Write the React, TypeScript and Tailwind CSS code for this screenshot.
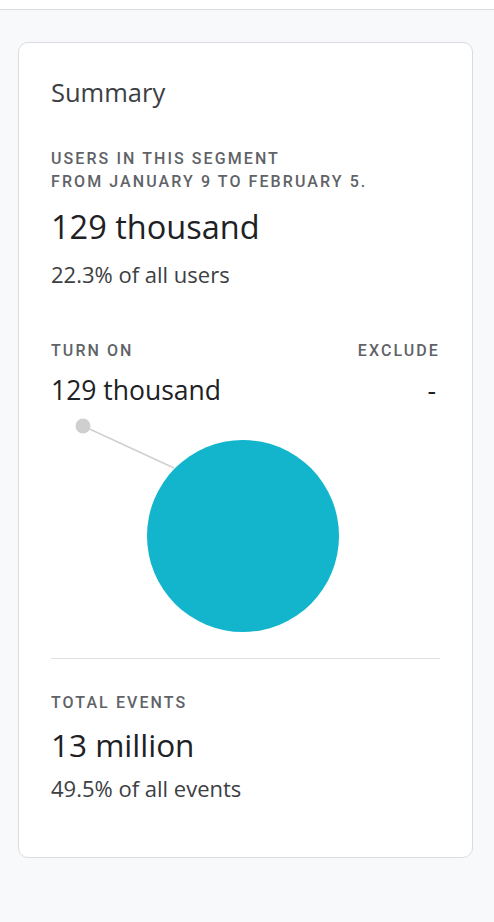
import React from 'react';

const Label: React.FC<{ children: React.ReactNode; className?: string }> = ({ children, className = '' }) => (
  <div
    className={`text-[16px] leading-[23px] font-medium tracking-[0.13em] uppercase text-[#5f6368] ${className}`}
    style={{ fontFamily: 'Roboto, sans-serif' }}
  >
    {children}
  </div>
);

const SegmentChart: React.FC = () => (
  <svg width="390" height="240" viewBox="0 0 390 240" className="block">
    <line x1="32" y1="19" x2="123" y2="61" stroke="#d0d0d0" strokeWidth="1.5" />
    <circle cx="32" cy="19" r="7.5" fill="#cfcfcf" />
    <circle cx="192" cy="129" r="96" fill="#12b5cb" />
  </svg>
);

export default function App() {
  return (
    <div className="min-h-[922px] bg-[#f8f9fa]" style={{ fontFamily: '"Open Sans", Roboto, sans-serif' }}>
      <div className="h-[10px] bg-white border-b border-[#dadce0]" />
      <div className="pt-[32px] pl-[18px] pb-[64px]">
        <div className="w-[455px] bg-white border border-[#dadce0] rounded-[10px] pt-[35px] pb-[56px] px-[32px] flex flex-col">
          <h2 className="text-[25.5px] leading-[28px] text-[#3c4043]">Summary</h2>

          <Label className="mt-[40.5px]">
            Users in this segment
            <br />
            From January 9 to February 5.
          </Label>
          <div className="mt-[16.5px] text-[32.5px] leading-[36px] text-[#202124]">129 thousand</div>
          <div className="mt-[16px] text-[22px] leading-[26px] text-[#3c4043]">22.3% of all users</div>

          <div className="mt-[51.5px] flex justify-between">
            <Label>Turn on</Label>
            <Label>Exclude</Label>
          </div>
          <div className="mt-[11.5px] flex justify-between text-[26.5px] leading-[34px] text-[#202124]">
            <span>129 thousand</span>
            <span className="pr-[4px]">-</span>
          </div>

          <SegmentChart />

          <div className="mt-[10.5px] border-t border-[#e0e0e0]" />

          <Label className="mt-[32.5px]">Total events</Label>
          <div className="mt-[13px] text-[31.5px] leading-[36px] text-[#202124]">13 million</div>
          <div className="mt-[12px] text-[22px] leading-[26px] text-[#3c4043]">49.5% of all events</div>
        </div>
      </div>
    </div>
  );
}
